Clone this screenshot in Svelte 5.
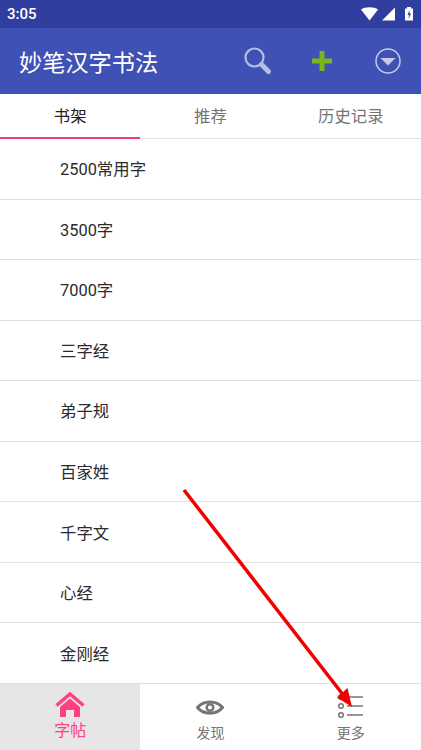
<script lang="ts">
	const tabs = ['书架', '推荐', '历史记录'];
	const books = ['2500常用字', '3500字', '7000字', '三字经', '弟子规', '百家姓', '千字文', '心经', '金刚经'];
	let activeTab = $state(0);
</script>

<div class="phone">
	<div class="status">
		<span class="time">3:05</span>
		<svg class="status-icons" width="56" height="16" viewBox="0 0 56 16">
			<path d="M2 3.500C6 .6 15 .6 19 3.500L10.500 14.500z" fill="#fff" />
			<path d="M36 1.500V14.500H23z" fill="#fff" />
			<path d="M46 2.500h2V1h4v1.500h2V14.500h-8z" fill="#fff" />
			<path d="M50.500 4l-2 5h1.500l-.5 4 2.500-5.500h-1.500z" fill="#303f9f" />
		</svg>
	</div>

	<header class="toolbar">
		<h1>妙笔汉字书法</h1>
		<svg class="search" width="30" height="30" viewBox="0 0 30 30">
			<circle cx="11.500" cy="10.500" r="9" fill="none" stroke="#b6bee3" stroke-width="2.200" />
			<path d="M18.500 17.500l7 7" stroke="#b6bee3" stroke-width="5" stroke-linecap="round" />
		</svg>
		<svg class="plus" width="24" height="24" viewBox="0 0 24 24">
			<path d="M9.500 2h5v7.500H22v5h-7.500V22h-5v-7.500H2v-5h7.500z" fill="#7cb518" />
		</svg>
		<svg class="more" width="28" height="28" viewBox="0 0 28 28">
			<circle cx="14" cy="14" r="12" fill="none" stroke="#c5cae9" stroke-width="1.500" />
			<path d="M6.500 11h15L14 18.500z" fill="#c5cae9" />
		</svg>
	</header>

	<nav class="tabs">
		{#each tabs as tab, i}
			<button class="tab" class:active={activeTab === i} onclick={() => (activeTab = i)}>{tab}</button>
		{/each}
	</nav>

	<ul class="list">
		{#each books as book}
			<li>{book}</li>
		{/each}
	</ul>

	<footer class="bottom">
		<div class="item selected">
			<svg width="30" height="26" viewBox="0 0 30 26">
				<path d="M1.500 13.500L15 2l13.500 11.500" fill="none" stroke="#ff4081" stroke-width="3.500" />
				<path d="M5 15L15 6.500 25 15v10H19v-7h-8v7H5z" fill="#ff4081" />
			</svg>
			<span>字帖</span>
		</div>
		<div class="item">
			<svg width="28" height="28" viewBox="0 0 28 28">
				<path d="M1.500 15.500C7.500 8 20.500 8 26.500 15.500 20.500 23 7.500 23 1.500 15.500z" fill="none" stroke="#757575" stroke-width="3" />
				<circle cx="14" cy="15.500" r="3.300" fill="none" stroke="#757575" stroke-width="2.500" />
			</svg>
			<span>发现</span>
		</div>
		<div class="item">
			<svg width="28" height="28" viewBox="0 0 28 28">
				<g fill="none" stroke="#757575" stroke-width="1.500">
					<circle cx="4" cy="5" r="2.300" />
					<circle cx="4" cy="14" r="2.300" />
					<circle cx="4" cy="23" r="2.300" />
				</g>
				<path d="M10 5h16M10 14h16M10 23h16" stroke="#757575" stroke-width="1.500" />
			</svg>
			<span>更多</span>
		</div>
	</footer>

	<svg class="arrow" width="421" height="750" viewBox="0 0 421 750">
		<path d="M184 490L344 696" stroke="#f00000" stroke-width="3.500" />
		<path d="M352 707L337 697.500 347.500 688z" fill="#f00000" />
	</svg>
</div>

<style>
	:global(body) {
		margin: 0;
		background: #fff;
	}

	.phone {
		position: relative;
		width: 421px;
		height: 750px;
		display: flex;
		flex-direction: column;
		overflow: hidden;
		font-family: Roboto, "Noto Sans CJK SC", sans-serif;
	}

	.status {
		height: 28px;
		flex: none;
		display: flex;
		align-items: center;
		justify-content: space-between;
		padding: 0 6px 0 7px;
		background: #303f9f;
		color: #fff;
	}

	.time {
		font-size: 15px;
		font-weight: 500;
	}

	.status-icons {
		display: block;
	}

	.toolbar {
		height: 66px;
		flex: none;
		display: flex;
		align-items: center;
		background: #3f51b5;
		box-sizing: border-box;
		padding: 0 19px;
	}

	h1 {
		margin: 0;
		flex: 1;
		font-size: 23.200px;
		font-weight: 400;
		color: #fff;
	}

	.search {
		margin-right: 37px;
		margin-top: 1px;
	}

	.plus {
		margin-right: 40px;
	}

	.tabs {
		height: 45px;
		flex: none;
		box-sizing: border-box;
		display: grid;
		grid-template-columns: repeat(3, 1fr);
		border-bottom: 1px solid #e0e0e0;
	}

	.tab {
		padding: 0 0 2px;
		border: none;
		background: none;
		font-family: inherit;
		font-size: 16.400px;
		color: #757575;
		margin-bottom: -1px;
		border-bottom: 2px solid transparent;
	}

	.tab.active {
		color: #212121;
		border-bottom-color: #ec407a;
	}

	.list {
		flex: 1;
		margin: 0;
		padding: 0;
		list-style: none;
		display: grid;
		grid-template-rows: repeat(9, 1fr);
	}

	.list li {
		display: flex;
		align-items: center;
		padding-left: 60px;
		padding-bottom: 1px;
		font-size: 16.400px;
		color: #2b2b2b;
		border-bottom: 1px solid #e0e0e0;
	}

	.bottom {
		height: 66px;
		flex: none;
		display: grid;
		grid-template-columns: repeat(3, 1fr);
	}

	.item {
		display: flex;
		flex-direction: column;
		align-items: center;
		padding-top: 8px;
		box-sizing: border-box;
		font-size: 14px;
		color: #757575;
	}

	.item svg {
		display: block;
		margin-bottom: 2px;
	}

	.item.selected {
		background: #e6e6e6;
		color: #ff4081;
		font-size: 16px;
		line-height: 20px;
	}

	.item.selected svg {
		margin-bottom: 3px;
	}

	.arrow {
		position: absolute;
		inset: 0;
		pointer-events: none;
	}
</style>
